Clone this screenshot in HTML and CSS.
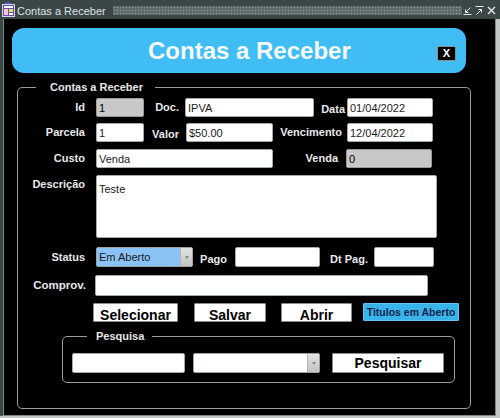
FILE: index.html
```html
<!DOCTYPE html>
<html lang="pt-BR">
<head>
<meta charset="utf-8">
<title>Contas a Receber</title>
<link rel="stylesheet" href="styles.css">
</head>
<body>
<div class="window">
  <div class="titlebar">
    <svg class="app-icon" viewBox="0 0 13 15" width="13" height="15">
      <path d="M1 3 L4 0.5 L8 0.5 L10 3 Z" fill="#4a66d0"/>
      <rect x="0.5" y="2.5" width="12" height="12" fill="#6b4f9e" stroke="#d6d6f0"/>
      <rect x="2" y="4" width="9" height="2" fill="#ffffff"/>
      <rect x="2" y="7" width="4" height="6" fill="#f2c4dc"/>
      <rect x="7" y="7" width="4" height="3" fill="#e8e070"/>
      <rect x="7" y="11" width="4" height="2" fill="#ffffff"/>
    </svg>
    <span class="win-title">Contas a Receber</span>
    <div class="dots"></div>
    <div class="controls">
      <svg class="ctl" viewBox="0 0 9 9" width="9" height="9"><path d="M7.5 1.5 L2.5 6.5 M2.5 3.5 L2.5 6.5 L5.5 6.5 M0.5 8.5 L8.5 8.5" stroke="#e6eaea" fill="none"/></svg>
      <svg class="ctl" viewBox="0 0 9 9" width="9" height="9"><path d="M0.5 0.5 L8.5 0.5 M1.5 8.5 L6.5 3.5 M3.5 3.5 L6.5 3.5 L6.5 6.5" stroke="#e6eaea" fill="none"/></svg>
      <svg class="ctl" viewBox="0 0 9 9" width="9" height="9"><path d="M1 1 L8 8 M8 1 L1 8" stroke="#e6eaea" stroke-width="1.4" fill="none"/></svg>
    </div>
  </div>
  <div class="client">
    <div class="header">
      <h1 class="header-title">Contas a Receber</h1>
      <button class="close-btn">X</button>
    </div>
    <fieldset class="group main-group">
      <legend class="legend-main">Contas a Receber</legend>
      <div class="row r1">
        <label class="lbl">Id</label>
        <input class="field ro w48" value="1" readonly>
        <label class="sub l-doc">Doc.</label>
        <input class="field w129" value="IPVA">
        <label class="sub l-data low">Data</label>
        <input class="field w86" value="01/04/2022">
      </div>
      <div class="row r2">
        <label class="lbl">Parcela</label>
        <input class="field w48" value="1">
        <label class="sub l-valor low">Valor</label>
        <input class="field w87" value="$50.00">
        <label class="sub l-venc">Vencimento</label>
        <input class="field w86" value="12/04/2022">
      </div>
      <div class="row r3">
        <label class="lbl">Custo</label>
        <input class="field w177" value="Venda">
        <label class="sub l-venda">Venda</label>
        <input class="field ro w86" value="0" readonly>
      </div>
      <div class="row r4">
        <label class="lbl lbl-desc">Descrição</label>
        <textarea class="field ta">Teste</textarea>
      </div>
      <div class="row r5">
        <label class="lbl">Status</label>
        <div class="select sel-status">
          <span class="sel-val">Em Aberto</span>
          <span class="sel-drop"><i class="tri"></i></span>
        </div>
        <label class="sub l-pago low">Pago</label>
        <input class="field w85" value="">
        <label class="sub l-dtpag low">Dt Pag.</label>
        <input class="field w60" value="">
      </div>
      <div class="row r6">
        <label class="lbl lbl-comp">Comprov.</label>
        <input class="field w333" value="">
      </div>
      <div class="row r7">
        <button class="btn btn-sel">Selecionar</button>
        <button class="btn btn-salvar">Salvar</button>
        <button class="btn btn-abrir">Abrir</button>
        <button class="btn-tit">Titulos em Aberto</button>
      </div>
      <fieldset class="group search-group">
        <legend class="legend-search">Pesquisa</legend>
        <div class="search-row">
          <input class="field w113" value="">
          <div class="select sel-search">
            <span class="sel-val"></span>
            <span class="sel-drop"><i class="tri"></i></span>
          </div>
          <button class="btn btn-pesq">Pesquisar</button>
        </div>
      </fieldset>
    </fieldset>
  </div>
</div>
</body>
</html>
```

FILE: styles.css
```css
* { box-sizing: border-box; }

body {
  margin: 0;
  font-family: "Liberation Sans", Arial, sans-serif;
  background: #c3c7c7;
}

.window {
  width: 500px;
  height: 418px;
  background: #c3c7c7;
  display: flex;
  flex-direction: column;
  overflow: hidden;
}

/* ---------- title bar ---------- */
.titlebar {
  height: 19px;
  flex: none;
  background: #3b4747;
  display: flex;
  align-items: center;
  padding-left: 2px;
  color: #dde2e2;
}

.app-icon { flex: none; }

.win-title {
  font-size: 11px;
  margin-left: 2px;
  padding-top: 2px;
  white-space: nowrap;
}

.dots {
  flex: 1;
  height: 9px;
  margin: 2px 1px 0 7px;
  background-image:
    radial-gradient(circle, #909c9c 0.8px, transparent 1.1px),
    radial-gradient(circle, #909c9c 0.8px, transparent 1.1px);
  background-size: 3px 3px;
  background-position: 0 0, 1.5px 1.5px;
}

.controls {
  display: flex;
  align-items: center;
  gap: 3px;
  margin-right: 4px;
  padding-top: 2px;
}

.ctl { flex: none; }

/* ---------- client ---------- */
.client {
  flex: 1;
  margin: 0 4px 2px 0;
  background: #000;
  border-left: 3px solid #3b4747;
  border-right: 1px solid #7d8787;
  border-bottom: 1px solid #7d8787;
  padding-left: 1px;
  box-shadow: inset 1px 0 0 #7a8585;
}

.header {
  margin: 9px 0 0 8px;
  width: 454px;
  height: 45px;
  background: #41bdf5;
  border-radius: 12px;
  display: flex;
  align-items: center;
  padding: 0 10px 0 136px;
}

.header-title {
  margin: 0;
  font-size: 24px;
  font-weight: bold;
  line-height: 28px;
  color: #f4fafd;
  white-space: nowrap;
}

.close-btn {
  margin-left: auto;
  align-self: flex-start;
  margin-top: 18px;
  width: 19px;
  height: 15px;
  background: #000;
  color: #fff;
  border: 1px solid #8d8d8d;
  border-radius: 2px;
  font: bold 11px/13px "Liberation Sans", Arial, sans-serif;
  padding: 0;
  text-align: center;
}

/* ---------- group boxes ---------- */
.group {
  border: 1px solid #9c9c9c;
  border-radius: 5px;
  margin: 0;
  padding: 0;
  min-width: 0;
}

.group legend {
  font-size: 11px;
  font-weight: bold;
  color: #e8e8e8;
  line-height: 13px;
}

.main-group {
  margin: 8px 0 0 13px;
  width: 454px;
  height: 328px;
  padding: 4px 0 0 0;
}

.legend-main {
  padding: 0 12px 0 14px;
  margin-left: 18px;
}

.search-group {
  margin: 8px 0 0 44px;
  width: 393px;
  height: 53px;
  padding: 10px 0 0 9px;
}

.legend-search {
  padding: 0 8px 0 9px;
  margin-left: 15px;
}

/* ---------- rows ---------- */
.row {
  display: flex;
  align-items: center;
}

.r1 { height: 19px; }
.r2 { height: 19px; margin-top: 6px; }
.r3 { height: 19px; margin-top: 7px; }
.r4 { height: 63px; margin-top: 7px; align-items: flex-start; }
.r5 { height: 20px; margin-top: 9px; }
.r6 { height: 21px; margin-top: 8px; }
.r7 { height: 19px; margin-top: 7px; padding-left: 75px; }

.lbl,
.sub {
  flex: none;
  text-align: right;
  font-size: 11px;
  font-weight: bold;
  line-height: 13px;
  color: #e8e8e8;
  white-space: nowrap;
}

.lbl { width: 67px; margin-right: 11px; }
.lbl-desc { align-self: flex-start; margin-top: 3px; }
.lbl-comp { width: 68px; margin-right: 9px; font-size: 11.5px; }

.low { align-self: flex-end; padding-bottom: 1px; }

.l-doc { width: 41px; padding-right: 6px; }
.l-data { width: 33px; padding-right: 2px; }
.l-valor { width: 42px; padding-right: 7px; }
.l-venc { width: 74px; padding-right: 5px; }
.l-venda { width: 73px; padding-right: 8px; }
.l-pago { width: 42px; padding-right: 8px; }
.l-dtpag { width: 54px; padding-right: 6px; }

/* ---------- fields ---------- */
.field {
  flex: none;
  height: 100%;
  border: 1px solid #a3abab;
  border-radius: 2px;
  background: #fff;
  font: 11px "Liberation Sans", Arial, sans-serif;
  color: #1a1a1a;
  padding: 0 2px;
  margin: 0;
  outline: none;
}

.ro {
  background: #c8c8c8;
  border-color: #9a9a9a;
  color: #000;
}

.w48 { width: 48px; }
.w60 { width: 60px; }
.w85 { width: 85px; }
.w86 { width: 86px; }
.w87 { width: 87px; }
.w113 { width: 113px; }
.w129 { width: 129px; }
.w177 { width: 177px; }
.w333 { width: 333px; }

.ta {
  width: 341px;
  height: 63px;
  resize: none;
  padding: 7px 2px;
  line-height: 13px;
}

.select {
  flex: none;
  display: flex;
  height: 100%;
  border: 1px solid #9aa3a3;
  border-radius: 2px;
  font-size: 11px;
  color: #1a1a1a;
  overflow: hidden;
}

.sel-status { width: 97px; background: #8cc3f6; }
.sel-search { width: 127px; margin-left: 8px; background: #fff; }

.sel-val {
  flex: 1;
  padding-left: 2px;
  line-height: 18px;
  white-space: nowrap;
}

.sel-drop {
  width: 12px;
  flex: none;
  background: linear-gradient(#e4e4e4, #c2c2c2);
  border-left: 1px solid #b4b4b4;
  display: flex;
  align-items: center;
  justify-content: center;
}

.tri {
  width: 0;
  height: 0;
  border-left: 2.5px solid transparent;
  border-right: 2.5px solid transparent;
  border-top: 3px solid #8a8a8a;
}

/* ---------- buttons ---------- */
.btn {
  flex: none;
  height: 19px;
  background: #fff;
  border: 1px solid #8a8a8a;
  border-radius: 1px;
  font: bold 14px/12px "Liberation Sans", Arial, sans-serif;
  color: #000;
  padding: 5px 0 0;
  margin: 0;
  text-align: center;
  white-space: nowrap;
}

.btn-sel { width: 85px; }
.btn-salvar { width: 72px; margin-left: 16px; }
.btn-abrir { width: 71px; margin-left: 15px; }

.btn-tit {
  flex: none;
  width: 96px;
  height: 18px;
  margin: 0 0 1px 11px;
  align-self: flex-start;
  background: #38b4ea;
  color: #14234a;
  border: 1px solid #62c4ee;
  border-radius: 1px;
  font: bold 10.5px/16px "Liberation Sans", Arial, sans-serif;
  padding: 0;
  text-align: center;
  white-space: nowrap;
}

.search-row {
  display: flex;
  height: 20px;
}

.btn-pesq {
  width: 112px;
  height: 20px;
  margin-left: 12px;
  padding: 0;
  line-height: 18px;
}
```
